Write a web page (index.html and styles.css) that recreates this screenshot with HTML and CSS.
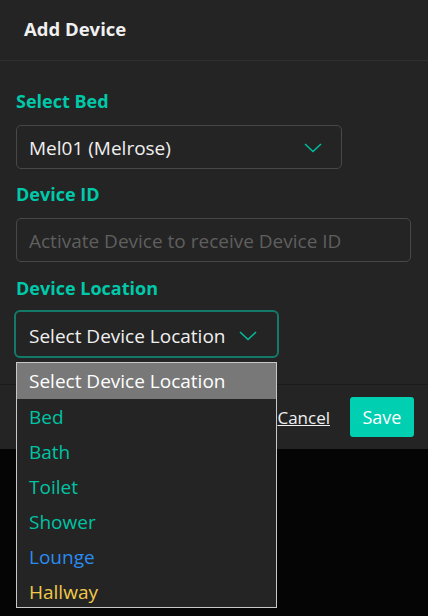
FILE: index.html
```html
<!DOCTYPE html>
<html lang="en">
<head>
    <meta charset="UTF-8">
    <meta name="viewport" content="width=device-width, initial-scale=1.0">
    <title>Add Device</title>
    <link rel="stylesheet" href="styles.css">
</head>
<body>

    <div class="modal">
        <div class="modal-header">
            <h3>Add Device</h3>
        </div>

        <div class="modal-body">
            <!-- Bed -->
            <label class="field-label first">Select Bed</label>
            <div class="select-box bed-select">
                <span>Mel01 (Melrose)</span>
                <svg class="chevron" width="18" height="10" viewBox="0 0 18 10"><polyline points="1,1 9,8.5 17,1" fill="none" stroke="#00bfa0" stroke-width="1.5"/></svg>
            </div>

            <!-- Device ID -->
            <label class="field-label">Device ID</label>
            <div class="text-input">Activate Device to receive Device ID</div>

            <!-- Location -->
            <label class="field-label">Device Location</label>
            <div class="select-box location-select">
                <span>Select Device Location</span>
                <svg class="chevron" width="18" height="10" viewBox="0 0 18 10"><polyline points="1,1 9,8.5 17,1" fill="none" stroke="#00bfa0" stroke-width="1.5"/></svg>
            </div>
        </div>

        <div class="modal-footer">
            <a class="btn-cancel">Cancel</a>
            <button class="btn-save">Save</button>
        </div>

        <!-- open options list of the location select -->
        <ul class="options">
            <li class="selected">Select Device Location</li>
            <li class="teal">Bed</li>
            <li class="teal">Bath</li>
            <li class="teal">Toilet</li>
            <li class="teal">Shower</li>
            <li class="blue">Lounge</li>
            <li class="yellow">Hallway</li>
        </ul>
    </div>

</body>
</html>
```
FILE: styles.css
```css
body {
    margin: 0;
    background-color: #050505;
    font-family: "Open Sans", "Noto Sans", sans-serif;
    color: #f2f2f2;
    width: 428px;
    height: 616px;
    overflow: hidden;
}
.modal {
    position: relative;
    background-color: #242424;
    width: 428px;
}
.modal-header {
    height: 61px;
    border-bottom: 1px solid #303030;
    padding-left: 24px;
    display: flex;
    align-items: center;
    box-sizing: border-box;
}
.modal-header h3 {
    margin: 0 0 4px 0;
    font-size: 18.5px;
    font-weight: 700;
    color: #f0f0f0;
}
.modal-body {
    padding: 28px 16px 26px 16px;
}
.field-label {
    display: block;
    height: 24px;
    line-height: 24px;
    font-size: 18px;
    font-weight: 700;
    color: #00c9aa;
    margin-top: 13px;
    margin-bottom: 12px;
}
.field-label.first {
    margin-top: 0;
}
.field-label:nth-of-type(3) {
    margin-top: 14px;
    margin-bottom: 10px;
}
.select-box {
    display: flex;
    align-items: center;
    justify-content: space-between;
    box-sizing: border-box;
    font-size: 19px;
    color: #f0f0f0;
}
.bed-select {
    width: 326px;
    height: 44px;
    border: 1px solid #484848;
    border-radius: 5px;
    padding: 1px 19px 0 12px;
}
.location-select {
    width: 265px;
    height: 48px;
    margin-left: -2px;
    border: 2px solid #137a69;
    border-radius: 6px;
    padding: 3px 20px 0 13px;
}
.chevron {
    display: block;
}
.text-input {
    box-sizing: border-box;
    width: 395px;
    height: 44px;
    border: 1px solid #484848;
    border-radius: 5px;
    padding: 1px 12px 0 12px;
    display: flex;
    align-items: center;
    font-size: 19px;
    color: #5f5f5f;
}
.modal-footer {
    border-top: 1px solid #1b1b1b;
    height: 64px;
    display: flex;
    align-items: center;
    justify-content: flex-end;
    padding-right: 14px;
    gap: 20px;
}
.btn-cancel {
    color: #f0f0f0;
    font-size: 17px;
    text-decoration: underline;
    cursor: pointer;
}
.btn-save {
    width: 64px;
    height: 40px;
    border: none;
    border-radius: 3px;
    background-color: #00cfb1;
    color: #ffffff;
    font-family: inherit;
    font-size: 18px;
    cursor: pointer;
}
.options {
    position: absolute;
    left: 16px;
    top: 362px;
    width: 261px;
    height: 246px;
    box-sizing: border-box;
    margin: 0;
    padding: 0;
    list-style: none;
    background-color: #242424;
    border: 1px solid #c8c8c8;
}
.options li {
    height: 35px;
    line-height: 37px;
    padding-left: 12px;
    font-size: 19px;
}
.options li.selected {
    height: 36px;
    line-height: 37px;
    background-color: #787878;
    color: #ffffff;
}
.options li.teal {
    color: #00c3a3;
}
.options li.blue {
    color: #2a8cf0;
}
.options li.yellow {
    color: #f2c94a;
}
```
